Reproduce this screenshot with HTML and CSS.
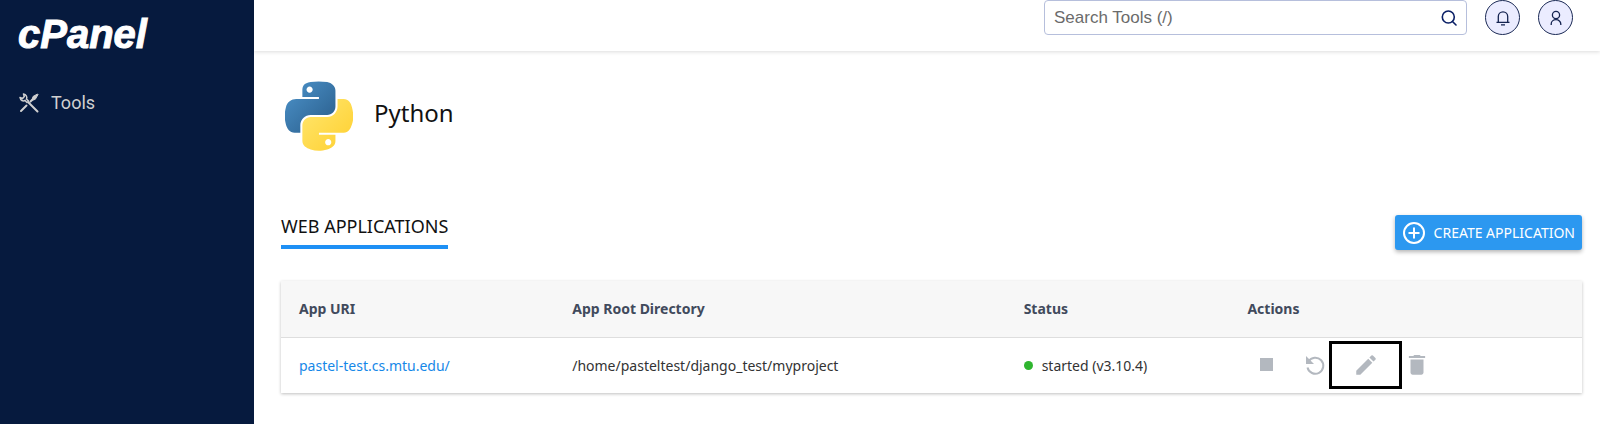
FILE: index.html
```html
<!DOCTYPE html>
<html lang="en">
<head>
<meta charset="utf-8">
<title>cPanel - Python</title>
<link rel="stylesheet" href="styles.css">
</head>
<body>
<div class="app">
  <aside class="sidebar">
    <a class="brand" href="#">cPanel</a>
    <nav>
      <a class="nav-link" href="#">
        <svg class="nav-icon" viewBox="0 0 20 20" fill="none" stroke="currentColor" stroke-width="2" stroke-linecap="round">
          <path d="M2 18L7.500 12.500M9 9L18.500 18.500M11.500 8.500L14 6"/>
          <path d="M1 4.500C1.500 7.500 4 8.500 6 7.500L8 9.500M4.500 1C7 1.500 8.500 4 7.500 6L9.500 8M1 4.500L3.500 5.500L5.300 3.500L4.500 1" stroke-width="1.500"/>
          <path d="M13 7L14 3.500L18.500 1L19 1.500L16.500 6Z" fill="currentColor" stroke-width="1"/>
        </svg>
        <span>Tools</span>
      </a>
    </nav>
  </aside>
  <div class="page">
    <header class="topbar">
      <form class="search">
        <input class="search-input" type="text" placeholder="Search Tools (/)" aria-label="Search Tools">
        <button class="search-button" type="button" aria-label="Search">
          <svg viewBox="0 0 16 16" width="16" height="16" fill="none" stroke="currentColor" stroke-width="1.600"><circle cx="7.300" cy="7" r="6"/><path d="M11.500 11.500L15 15" stroke-linecap="round"/></svg>
        </button>
      </form>
      <button class="round-button" type="button" aria-label="Notifications">
        <svg viewBox="0 0 16 16" width="16" height="16" fill="none" stroke="currentColor" stroke-width="1.300"><path d="M1.500 12.300H14.500M3.300 12.300V6.500A4.700 4.700 0 0 1 12.700 6.500V12.300M6 14.800H10"/></svg>
      </button>
      <button class="round-button" type="button" aria-label="Account">
        <svg viewBox="0 0 16 16" width="16" height="16" fill="none" stroke="currentColor" stroke-width="1.300"><circle cx="8" cy="5" r="3.600"/><path d="M3.200 15V14A4.800 4.300 0 0 1 12.800 14V15"/></svg>
      </button>
    </header>
    <main class="content">
      <div class="title-row">
        <svg class="python-logo" viewBox="0 0 110 112">
          <defs>
            <linearGradient id="blue" x1="0" y1="0" x2="1" y2="1"><stop offset="0" stop-color="#4d94cc"/><stop offset="1" stop-color="#285b88"/></linearGradient>
            <linearGradient id="gold" x1="0" y1="0" x2="1" y2="1"><stop offset="0" stop-color="#ffe770"/><stop offset="1" stop-color="#ffcf2e"/></linearGradient>
          </defs>
          <path fill="url(#blue)" d="M54.300 0C49.700 0 45.400.400 41.500 1.100 30.200 3.100 28.100 7.300 28.100 15.100V25.300H54.900V28.700H18.100C10.300 28.700 3.500 33.400 1.400 42.300-1.100 52.500-1.200 58.900 1.400 69.500 3.300 77.400 7.800 83 15.600 83H24.800V70.800C24.800 62 32.400 54.200 41.500 54.200H68.200C75.600 54.200 81.600 48.100 81.600 40.600V15.100C81.600 7.800 75.500 2.400 68.200 1.100 63.600.400 58.900 0 54.300 0ZM39.800 8.200C42.600 8.200 44.800 10.500 44.800 13.300S42.600 18.400 39.800 18.400C37.100 18.400 34.800 16.100 34.800 13.300S37.100 8.200 39.800 8.200Z"/>
          <path fill="url(#gold)" d="M85 28.700V40.500C85 49.700 77.200 57.500 68.200 57.500H41.500C34.200 57.500 28.100 63.800 28.100 71.100V96.600C28.100 103.900 34.400 108.100 41.500 110.200 50 112.700 58.100 113.100 68.200 110.200 74.900 108.300 81.600 104.300 81.600 96.600V86.400H54.900V83H95C102.800 83 105.700 77.600 108.400 69.500 111.200 61.100 111.100 53.100 108.400 42.300 106.500 34.500 102.800 28.700 95 28.700ZM69.900 93.200C72.700 93.200 74.900 95.500 74.900 98.300S72.700 103.400 69.900 103.400C67.200 103.400 64.900 101.100 64.900 98.300S67.200 93.200 69.900 93.200Z"/>
        </svg>
        <h1 class="title">Python</h1>
      </div>
      <div class="section-row">
        <h2 class="tab">WEB APPLICATIONS</h2>
        <button class="create-button" type="button">
          <svg viewBox="0 0 24 24" width="24" height="24" fill="none" stroke="currentColor" stroke-width="2"><circle cx="12" cy="12" r="10"/><path d="M12 6.500V17.500M6.500 12H17.500"/></svg>
          <span>CREATE APPLICATION</span>
        </button>
      </div>
      <table class="apps">
        <colgroup><col class="col-uri"><col class="col-root"><col class="col-status"><col></colgroup>
        <thead>
          <tr><th>App URI</th><th>App Root Directory</th><th>Status</th><th>Actions</th></tr>
        </thead>
        <tbody>
          <tr>
            <td><a class="uri" href="#">pastel-test.cs.mtu.edu/</a></td>
            <td>/home/pasteltest/django_test/myproject</td>
            <td><span class="status"><span class="dot"></span>started (v3.10.4)</span></td>
            <td>
              <div class="actions">
                <button class="action" type="button" aria-label="Stop"><svg viewBox="0 0 24 24" width="24" height="24" fill="currentColor"><path d="M5 5H18V18H5Z"/></svg></button>
                <button class="action" type="button" aria-label="Restart"><svg viewBox="0 0 24 24" width="24" height="24" fill="none" stroke="currentColor" stroke-width="2"><path d="M5.500 8.500A8 8 0 1 1 4.500 14.500"/><path d="M3 3L3 11H11Z" fill="currentColor" stroke="none"/></svg></button>
                <button class="action action-selected" type="button" aria-label="Edit"><svg viewBox="0 0 24 24" width="26" height="26" fill="currentColor"><path d="M3 17.250V21H6.750L17.810 9.940L14.060 6.190ZM20.710 7.040A1 1 0 0 0 20.710 5.630L18.370 3.290A1 1 0 0 0 16.960 3.290L15.130 5.120L18.880 8.870Z"/></svg></button>
                <button class="action" type="button" aria-label="Delete"><svg viewBox="0 0 24 24" width="26" height="26" fill="currentColor"><path d="M6 19C6 20.100 6.900 21 8 21H16C17.100 21 18 20.100 18 19V7H6ZM19 3.700H15.500L14.500 2.700H9.500L8.500 3.700H4.500V5.500H19.500V3.700Z"/></svg></button>
              </div>
            </td>
          </tr>
        </tbody>
      </table>
    </main>
  </div>
</div>
</body>
</html>
```
FILE: styles.css
```css
* { box-sizing: border-box; }
body { margin: 0; background: #fff; color: #111; font-family: "Noto Sans", sans-serif; font-size: 14px; }
button { font: inherit; border: 0; padding: 0; background: none; cursor: pointer; }
svg { display: block; }
.app { display: flex; min-height: 100vh; }
.sidebar { width: 254px; flex: none; background: #061a3e; padding: 11px 18px; }
.brand { display: block; color: #fff; font: italic bold 40px/46px "Liberation Sans", sans-serif; -webkit-text-stroke: 1px #fff; text-decoration: none; }
.nav-link { display: flex; align-items: center; gap: 12px; margin-top: 34px; padding-left: 1px; color: #d0d0d0; font: 18px/24px Roboto, sans-serif; text-decoration: none; }
.nav-icon { width: 20px; height: 20px; }
.page { flex: 1; min-width: 0; }
.topbar { display: flex; justify-content: flex-end; height: 51px; padding-right: 27px; gap: 18px; box-shadow: 0 1px 4px rgba(0, 0, 0, .14); }
.search { display: flex; width: 423px; height: 35px; border: 1px solid #b6bfdc; border-radius: 4px; }
.search-input { flex: 1; min-width: 0; border: 0; outline: 0; background: none; padding: 0 9px; font: 17px "Liberation Sans", sans-serif; }
.search-input::placeholder { color: #6b6b6b; opacity: 1; }
.search-button { width: 34px; color: #0a1f66; display: grid; place-items: center; }
.round-button { width: 35px; height: 35px; border: 1px solid #1b2a55; border-radius: 50%; background: #ebecff; color: #142350; display: grid; place-items: center; }
.content { padding: 30px 18px 30px 27px; }
.title-row { display: flex; align-items: flex-start; gap: 21px; padding-left: 4px; }
.python-logo { width: 68px; height: 70px; }
.title { margin: 0; padding-top: 16px; font-size: 24px; font-weight: 400; line-height: 32px; }
.section-row { display: flex; justify-content: space-between; align-items: center; margin-top: 61px; }
.tab { margin: 0; padding-bottom: 7px; border-bottom: 4px solid #1e90f5; font-size: 18px; font-weight: 400; line-height: 24px; }
.create-button { display: flex; align-items: center; gap: 8px; height: 35px; margin-top: 3px; padding: 0 7px; border-radius: 3px; background: #2c98f0; color: #fff; box-shadow: 0 2px 4px rgba(0, 0, 0, .3); }
.apps { width: 100%; margin-top: 31px; border-collapse: collapse; table-layout: fixed; box-shadow: 0 1px 3px rgba(0, 0, 0, .25); }
.col-uri { width: 21%; }
.col-root { width: 34.700%; }
.col-status { width: 17.200%; }
th, td { height: 56px; padding: 0 17px 0 18px; text-align: left; white-space: nowrap; }
th { background: #f7f7f7; color: #414a5c; font-weight: 700; border-bottom: 1px solid #dedede; }
td { color: #333; }
.uri { color: #1688e8; text-decoration: none; }
.status { display: flex; align-items: center; gap: 9px; }
.dot { width: 9px; height: 9px; border-radius: 50%; background: #2fb52f; }
.actions { display: flex; align-items: center; padding-left: 8px; }
.action { display: grid; place-items: center; color: #b3b8bf; }
.action + .action { margin-left: 24px; }
.action-selected { width: 73px; height: 48px; border: 3px solid #000; }
.action.action-selected, .action-selected + .action { margin-left: 2px; }
```
